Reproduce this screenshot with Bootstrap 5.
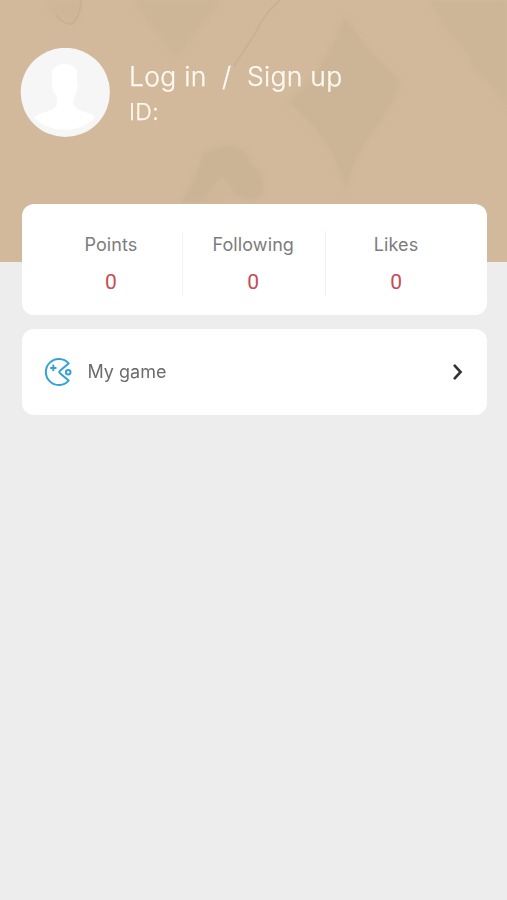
<!DOCTYPE html>
<html lang="en">
<head>
<meta charset="utf-8">
<meta name="viewport" content="width=device-width, initial-scale=1">
<title>Profile</title>
<link href="https://cdn.jsdelivr.net/npm/bootstrap@5.3.0/dist/css/bootstrap.min.css" rel="stylesheet">
<style>
body{background:#ededed;font-family:Inter,"Liberation Sans",sans-serif;min-height:900px}
.hero{height:262px;background:#d3b99b;padding:48px 20px 0}
.hero-art{top:0;left:0;width:100%;height:262px}
.avatar{width:90px;height:90px;margin-right:19px}
.login{font-size:26.5px;line-height:32px;font-weight:350;letter-spacing:.28px;color:#fffaf3;margin-top:12px;white-space:pre;-webkit-text-stroke:.25px #fffaf3}
.uid{font-size:23px;line-height:28px;font-weight:350;letter-spacing:.3px;color:#fffaf3;margin-top:6px;-webkit-text-stroke:.25px #fffaf3}
.panel{border-radius:12px}
.stats{margin-top:-57.6px;height:111px;padding:27px 19px 19px 18px}
.stats .col+.col{border-left:1px solid #f2f2f2}
.label-txt{font-size:18px;line-height:26px;color:#7c7c7c}
.stats .label-txt{letter-spacing:.1px;padding-top:1px}
.stats .col+.col>div{margin-left:-1px}
.num{font-family:Roboto,"Liberation Sans",sans-serif;font-size:21px;line-height:26px;color:#c84a54;margin-top:11px}
.item{margin-top:14px;height:86px;padding:0 23px 0 22px}
.item .label-txt{color:#6c6c6c;margin-left:15.5px}
.cards-wrap{padding:0 20.5px 0 22px}
</style>
<script src="https://cdn.jsdelivr.net/npm/bootstrap@5.3.0/dist/js/bootstrap.bundle.min.js"></script>
</head>
<body>
<header class="hero position-relative">
<svg class="hero-art position-absolute" viewBox="0 0 507 262" preserveAspectRatio="none" aria-hidden="true">
<defs><filter id="soft"><feGaussianBlur stdDeviation="2"/></filter></defs>
<g filter="url(#soft)" fill="#cab495">
<path d="M132 0H222L176 60Z" opacity=".6"/>
<path d="M345 15Q362 45 402 83Q388 115 370 137Q356 155 346 192Q334 154 318 132L287 101Q321 72 326 55Q337 35 345 15Z" opacity=".85"/>
<path d="M428 0H507V111Q492 82 472 68Q469 51 463 48Q442 28 428 0Z" opacity=".65"/>
<path d="M180 203Q196 178 203 154Q213 145 235 145Q247 150 252 163Q268 178 263 195L250 201L236 195Q228 180 220 177L202 203Z"/>
<path d="M202 203L218 178Q230 176 240 199Z" opacity=".4"/>
<path d="M44 0Q50 16 61 20L79 21L81 0Z" opacity=".55"/>
</g>
<path d="M56 15Q62 24 72 24Q81 16 81 0M280 0Q263 15 256 32L234 66" fill="none" stroke="#bfa587" stroke-width="1.8" opacity=".4"/>
</svg>
<div class="d-flex position-relative">
<svg class="avatar flex-shrink-0" viewBox="0 0 90 90" role="img" aria-label="Avatar">
<defs><clipPath id="disc"><circle cx="45.3" cy="44.4" r="44.6"/></clipPath></defs>
<circle cx="45.3" cy="44.4" r="44.6" fill="#f6f6f6"/>
<path clip-path="url(#disc)" fill="#fff" d="M32 24Q33 17 44 16Q57 17 57 25V37Q59 38 57 43L55 48Q53 49 53 56Q55 61 65 64Q75 67 75 70Q62 82 45 82Q27 82 14 70Q17 66 25 64Q36 61 37 56V49Q33 44 32 38Z"/>
</svg>
<div>
<div class="login">Log in  /  Sign up</div>
<div class="uid">ID:</div>
</div>
</div>
</header>
<main class="cards-wrap position-relative">
<section class="panel stats bg-white">
<div class="row g-0 text-center h-100">
<div class="col"><div class="label-txt">Points</div><div class="num">0</div></div>
<div class="col"><div class="label-txt">Following</div><div class="num">0</div></div>
<div class="col"><div class="label-txt">Likes</div><div class="num">0</div></div>
</div>
</section>
<section class="panel item bg-white d-flex align-items-center">
<svg width="28" height="28" viewBox="0 0 28 28" fill="none" stroke="#34a0dc" stroke-width="2" stroke-linejoin="round" stroke-linecap="round" aria-hidden="true">
<path d="M24.6 5.4A13 13 0 1 0 24.6 22.6L16 15.2Q14.6 14 16 12.8Z"/>
<circle cx="24.2" cy="14.2" r="2.3"/>
<path d="M9.3 7.5V12.3M6.9 9.9H11.7"/>
</svg>
<span class="label-txt">My game</span>
<svg class="ms-auto" width="12" height="18" viewBox="0 0 12 18" fill="none" stroke="#333" stroke-width="2.6" aria-hidden="true"><path d="M2 1.8L8.6 9L2 16.2"/></svg>
</section>
</main>
</body>
</html>
